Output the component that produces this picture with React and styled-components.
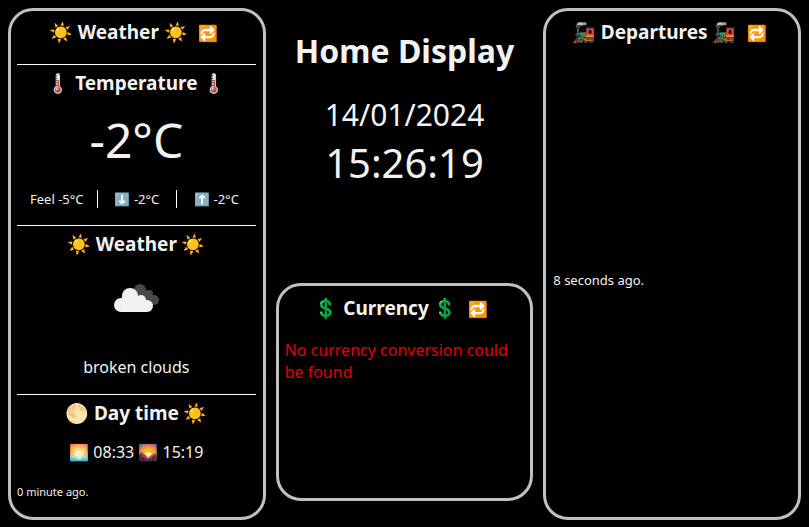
import React from "react";
import styled, { createGlobalStyle } from "styled-components";

const GlobalStyle = createGlobalStyle`
  *, *::before, *::after { box-sizing: border-box; }
  body {
    margin: 8px;
    background: #000;
    color: #f2f2f2;
    font-family: "Noto Sans", "Noto Color Emoji", sans-serif;
    font-size: 16px;
    line-height: 22px;
  }
  h1, h2, h3, p { margin: 0; }
`;

const Dashboard = styled.main`
  display: grid;
  grid-template-columns: repeat(3, minmax(0, 1fr));
  gap: 10px;
`;

const Panel = styled.section`
  display: flex;
  flex-direction: column;
  border: 3px solid #c0c0c0;
  border-radius: 25px;
  padding: 8px 7px 18px 6px;
`;

const CurrencyPanel = styled(Panel)`
  flex: 1;
  margin-bottom: 19px;
  padding-top: 9px;
`;

const DeparturesPanel = styled(Panel)`
  padding-left: 7px;
  padding-bottom: 22px;
`;

const CenterColumn = styled.div`
  display: flex;
  flex-direction: column;
`;

const PanelHeader = styled.header`
  display: flex;
  justify-content: center;
  align-items: center;
  margin-bottom: ${({ $compact }) => ($compact ? "18px" : "19px")};
`;

const Title = styled.h2`
  font-size: 19px;
  line-height: 26px;
  font-weight: 700;
  text-align: center;
`;

const SectionTitle = styled(Title).attrs({ as: "h3" })``;

const RefreshButton = styled.button`
  border: 0;
  padding: 2px 5px 0 6px;
  margin-left: 5px;
  background: transparent;
  color: inherit;
  font: inherit;
  line-height: 22px;
  cursor: pointer;
`;

const Section = styled.section`
  border-top: 1px solid #fff;
  padding: 5px 0 16px;
`;

const Temperature = styled.p`
  margin: 11px 0 18px;
  font-size: 48px;
  line-height: 65px;
  text-align: center;
`;

const TemperatureDetails = styled.div`
  display: grid;
  grid-template-columns: repeat(3, 1fr);
  margin-bottom: 17px;
`;

const Detail = styled.span`
  font-size: 13px;
  line-height: 18px;
  text-align: center;
  & + & { border-left: 1px solid #fff; }
`;

const TemperatureSection = styled(Section)`
  padding-bottom: 0;
`;

const CloudIcon = styled.svg`
  display: block;
  width: 45px;
  height: 28px;
  margin: 27px auto 44px;
`;

const CenteredText = styled.p`
  text-align: center;
`;

const SunTimes = styled(CenteredText)`
  margin-top: 15px;
`;

const Updated = styled.p`
  font-size: ${({ $small }) => ($small ? "11px" : "13px")};
  line-height: ${({ $small }) => ($small ? "15px" : "18px")};
  margin: ${({ $small }) => ($small ? "5px 0 0" : "auto 0")};
`;

const Clock = styled.header`
  display: flex;
  flex-direction: column;
  align-items: center;
  padding: 21px 0 92px;
`;

const PageTitle = styled.h1`
  font-size: 32px;
  line-height: 44px;
  font-weight: 700;
`;

const DateText = styled.time`
  margin-top: 21px;
  font-size: 30px;
  line-height: 41px;
`;

const TimeText = styled.time`
  font-size: 40px;
  line-height: 56px;
`;

const ErrorText = styled.p`
  color: #e60000;
`;

function Header({ icon, compact, children }) {
  return (
    <PanelHeader $compact={compact}>
      <Title>{icon} {children} {icon}</Title>
      <RefreshButton type="button" aria-label={`Refresh ${children}`}>🔁</RefreshButton>
    </PanelHeader>
  );
}

function BrokenClouds() {
  return (
    <CloudIcon viewBox="0 0 45 28" role="img" aria-label="broken clouds">
      <g fill="#484849">
        <circle cx="26" cy="6" r="6" />
        <circle cx="35" cy="10" r="4" />
        <circle cx="40" cy="16" r="5" />
        <path d="M20 7 31 5 38 12 40 21H28Z" />
      </g>
      <g fill="#f2f2f0">
        <circle cx="16" cy="12" r="8" />
        <circle cx="7" cy="21" r="7" />
        <circle cx="27" cy="16" r="5" />
        <circle cx="33" cy="22" r="6" />
        <path d="M8 12H24L33 18V28H7Z" />
      </g>
    </CloudIcon>
  );
}

export default function App() {
  return (
    <>
      <GlobalStyle />
      <Dashboard>
        <Panel>
          <Header icon="☀️">Weather</Header>
          <TemperatureSection>
            <SectionTitle>🌡️ Temperature 🌡️</SectionTitle>
            <Temperature>-2°C</Temperature>
            <TemperatureDetails>
              <Detail>Feel -5°C</Detail>
              <Detail>⬇️ -2°C</Detail>
              <Detail>⬆️ -2°C</Detail>
            </TemperatureDetails>
          </TemperatureSection>
          <Section>
            <SectionTitle>☀️ Weather ☀️</SectionTitle>
            <BrokenClouds />
            <CenteredText>broken clouds</CenteredText>
          </Section>
          <Section>
            <SectionTitle>🌕 Day time ☀️</SectionTitle>
            <SunTimes>🌅 08:33 🌄 15:19</SunTimes>
          </Section>
          <Updated $small>0 minute ago.</Updated>
        </Panel>

        <CenterColumn>
          <Clock>
            <PageTitle>Home Display</PageTitle>
            <DateText dateTime="2024-01-14">14/01/2024</DateText>
            <TimeText dateTime="15:26:19">15:26:19</TimeText>
          </Clock>
          <CurrencyPanel>
            <Header icon="💲" compact>Currency</Header>
            <ErrorText>No currency conversion could be found</ErrorText>
          </CurrencyPanel>
        </CenterColumn>

        <DeparturesPanel>
          <Header icon="🚂">Departures</Header>
          <Updated>8 seconds ago.</Updated>
        </DeparturesPanel>
      </Dashboard>
    </>
  );
}
